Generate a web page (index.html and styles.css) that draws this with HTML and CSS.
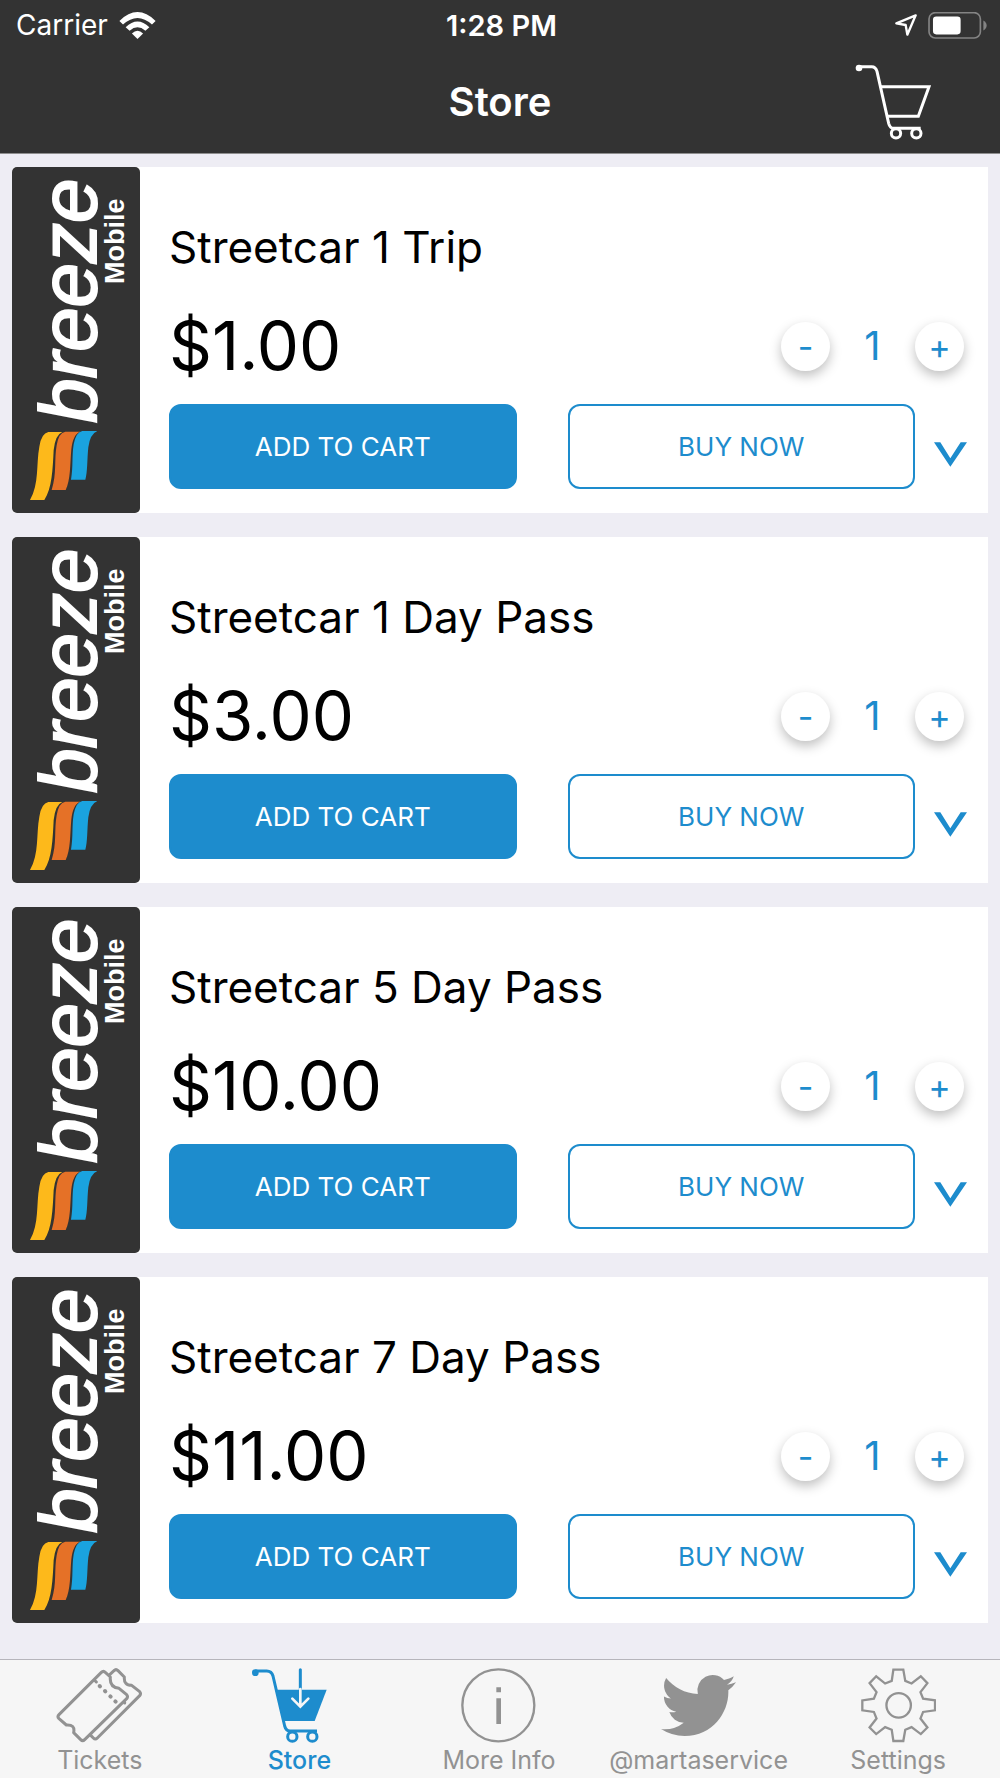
FILE: index.html
```html
<!DOCTYPE html>
<html lang="en">
<head>
<meta charset="utf-8">
<meta name="viewport" content="width=device-width, initial-scale=1">
<title>Store</title>
<link rel="stylesheet" href="styles.css">
</head>
<body>
<svg class="sprite" aria-hidden="true">
  <symbol id="cart" viewBox="0 0 231 228">
    <circle cx="12" cy="12" r="10" fill="currentColor"/>
    <g fill="none" stroke="currentColor" stroke-width="9">
      <path d="M10 8H50Q62 8 66 22L101 178Q105 193 116 193H197"/>
      <path d="M77 68H222L190 157H97"/>
      <circle cx="123" cy="208" r="14"/>
      <circle cx="184" cy="208" r="14"/>
    </g>
  </symbol>
  <symbol id="chevron" viewBox="0 0 99 74">
    <path d="M0 0H19L49 48L80 0H99L49 74Z" fill="currentColor"/>
  </symbol>
  <symbol id="breeze" viewBox="0 0 128 346">
    <g transform="rotate(-90)">
      <text class="brand-name" x="-256" y="84">breeze</text>
      <text class="brand-sub" x="-117" y="112">Mobile</text>
    </g>
    <g transform="translate(-12 -7) scale(.33333)">
      <path d="M145 816H187Q166 824 161 870C158 930 156 985 133 1020H90C118 970 108 915 118 860Q124 820 145 816Z" fill="#fdb91b"/>
      <path d="M196 815H241Q219 822 214 868C210 915 212 960 197 990H155C171 940 162 900 170 856Q176 818 196 815Z" fill="#e57127"/>
      <path d="M247 813H292Q270 822 265 862C261 900 263 935 256 959H213C220 920 215 890 221 853Q228 816 247 813Z" fill="#1aa3df"/>
    </g>
  </symbol>
</svg>

<header class="top">
  <div class="status">
    <div class="status-left">
      <span>Carrier</span>
      <svg class="wifi" viewBox="0 0 110 82" aria-hidden="true">
        <g fill="#fff">
          <path d="M0 27Q55-27 110 27L99 38Q55-2 11 38Z"/>
          <path d="M19 46Q55 12 91 46L79 57Q55 36 31 57Z"/>
          <path d="M38 65Q55 49 72 65L55 82Z"/>
        </g>
      </svg>
    </div>
    <div class="status-time">1:28 PM</div>
    <div class="status-right">
      <svg class="locate" viewBox="0 0 66 66" aria-hidden="true"><path d="M62 4L4 28L32 33L37 62Z" fill="none" stroke="#fff" stroke-width="7" stroke-linejoin="round"/></svg>
      <svg class="battery" viewBox="0 0 177 82" aria-hidden="true">
        <rect x="2" y="2" width="156" height="77" rx="19" fill="none" stroke="#848484" stroke-width="5"/>
        <rect x="14" y="14" width="84" height="54" rx="10" fill="#fff"/>
        <path d="M167 26Q177 32 177 41T167 56Z" fill="#848484"/>
      </svg>
    </div>
  </div>
  <div class="navbar">
    <h1>Store</h1>
    <button class="cart-button" aria-label="Cart"><svg><use href="#cart"/></svg></button>
  </div>
</header>

<main class="products">
  <article class="card">
    <svg class="brand" role="img" aria-label="breeze Mobile"><use href="#breeze"/></svg>
    <div class="info">
      <h2>Streetcar 1 Trip</h2>
      <div class="price-row">
        <span class="price">$1.00</span>
        <div class="stepper"><button aria-label="Decrease">-</button><output>1</output><button aria-label="Increase">+</button></div>
      </div>
      <div class="actions">
        <button class="action add">ADD TO CART</button>
        <button class="action buy">BUY NOW</button>
        <button class="expand" aria-label="Details"><svg><use href="#chevron"/></svg></button>
      </div>
    </div>
  </article>
  <article class="card">
    <svg class="brand" role="img" aria-label="breeze Mobile"><use href="#breeze"/></svg>
    <div class="info">
      <h2>Streetcar 1 Day Pass</h2>
      <div class="price-row">
        <span class="price">$3.00</span>
        <div class="stepper"><button aria-label="Decrease">-</button><output>1</output><button aria-label="Increase">+</button></div>
      </div>
      <div class="actions">
        <button class="action add">ADD TO CART</button>
        <button class="action buy">BUY NOW</button>
        <button class="expand" aria-label="Details"><svg><use href="#chevron"/></svg></button>
      </div>
    </div>
  </article>
  <article class="card">
    <svg class="brand" role="img" aria-label="breeze Mobile"><use href="#breeze"/></svg>
    <div class="info">
      <h2>Streetcar 5 Day Pass</h2>
      <div class="price-row">
        <span class="price">$10.00</span>
        <div class="stepper"><button aria-label="Decrease">-</button><output>1</output><button aria-label="Increase">+</button></div>
      </div>
      <div class="actions">
        <button class="action add">ADD TO CART</button>
        <button class="action buy">BUY NOW</button>
        <button class="expand" aria-label="Details"><svg><use href="#chevron"/></svg></button>
      </div>
    </div>
  </article>
  <article class="card">
    <svg class="brand" role="img" aria-label="breeze Mobile"><use href="#breeze"/></svg>
    <div class="info">
      <h2>Streetcar 7 Day Pass</h2>
      <div class="price-row">
        <span class="price">$11.00</span>
        <div class="stepper"><button aria-label="Decrease">-</button><output>1</output><button aria-label="Increase">+</button></div>
      </div>
      <div class="actions">
        <button class="action add">ADD TO CART</button>
        <button class="action buy">BUY NOW</button>
        <button class="expand" aria-label="Details"><svg><use href="#chevron"/></svg></button>
      </div>
    </div>
  </article>
</main>

<nav class="tabs">
  <a href="#tickets">
    <svg class="wide" viewBox="166 84 261 225" aria-hidden="true">
      <g fill="none" stroke="currentColor" stroke-width="9" stroke-linejoin="round" stroke-linecap="round">
        <path d="M302 97Q308 91 314 97L329 111Q326 142 355 145L378 164Q383 170 378 176L252 299Q246 305 240 299L219 278Q224 253 197 255L175 236Q169 230 175 224Z"/>
        <path d="M328 103L340 92Q346 86 352 92L371 111Q369 136 393 136L417 155Q422 161 417 167L290 294Q284 300 278 294L271 287M372 187V189M284 123L287 126"/>
        <path d="M297 138L298 139M313 153L314 154M329 169L330 170M344 184L345 185" stroke-width="12"/>
      </g>
    </svg>
    <span>Tickets</span>
  </a>
  <a href="#store" class="active" aria-current="page">
    <svg class="store" viewBox="0 0 282 225" aria-hidden="true">
      <circle cx="10" cy="14" r="10" fill="currentColor"/>
      <g fill="none" stroke="currentColor" stroke-width="9">
        <path d="M10 9H44Q59 9 63 24L98 174Q102 189 114 189H195"/>
        <circle cx="121" cy="206" r="14"/>
        <circle cx="181" cy="206" r="14"/>
        <path d="M145 5V66" stroke-linecap="round"/>
      </g>
      <path d="M72 65H224L188 159H96Z" fill="currentColor"/>
      <path d="M145 63V115M121 92L145 116L169 92" fill="none" stroke="#f6f6f6" stroke-width="8" stroke-linecap="round"/>
    </svg>
    <span>Store</span>
  </a>
  <a href="#info">
    <svg viewBox="0 0 225 225" aria-hidden="true">
      <circle cx="112" cy="112" r="108" fill="none" stroke="currentColor" stroke-width="7"/>
      <path d="M106 58H120V73H106ZM106 91H120V168H106Z" fill="currentColor"/>
    </svg>
    <span>More Info</span>
  </a>
  <a href="#twitter">
    <svg viewBox="0 0 24 24" aria-hidden="true"><path fill="currentColor" d="M23.953 4.57a10 10 0 01-2.825.775 4.958 4.958 0 002.163-2.723c-.951.555-2.005.959-3.127 1.184a4.92 4.92 0 00-8.384 4.482C7.69 8.095 4.067 6.13 1.64 3.162a4.822 4.822 0 00-.666 2.475c0 1.71.87 3.213 2.188 4.096a4.904 4.904 0 01-2.228-.616v.06a4.923 4.923 0 003.946 4.827 4.996 4.996 0 01-2.212.085 4.936 4.936 0 004.604 3.417 9.867 9.867 0 01-6.102 2.105c-.39 0-.779-.023-1.17-.067a13.995 13.995 0 007.557 2.209c9.053 0 13.998-7.496 13.998-13.985 0-.21 0-.42-.015-.63A9.935 9.935 0 0024 4.59z"/></svg>
    <span>@martaservice</span>
  </a>
  <a href="#settings">
    <svg viewBox="604 84 227 225" aria-hidden="true">
      <g fill="none" stroke="currentColor" stroke-width="7">
        <path d="M702 88H732L738 122L757 130L785 108L805 129L784 156L792 176L828 181V211L792 216L784 236L805 263L785 283L757 262L738 270L732 304H702L697 270L677 262L650 283L630 263L651 236L643 216L608 211V181L643 176L651 156L630 129L650 108L677 130L697 122Z"/>
        <circle cx="718" cy="196" r="37"/>
      </g>
    </svg>
    <span>Settings</span>
  </a>
</nav>
</body>
</html>
```
FILE: styles.css
```css
* { box-sizing: border-box; }

body {
  margin: 0;
  min-height: 100vh;
  display: flex;
  flex-direction: column;
  background: #eeedf4;
  color: #000;
  font-family: Inter, "Liberation Sans", sans-serif;
}

button {
  margin: 0;
  padding: 0;
  border: 0;
  background: none;
  font: inherit;
  color: inherit;
  cursor: pointer;
}

h1, h2 { margin: 0; }
svg { display: block; }
.sprite { display: none; }

.top {
  background: #333;
  color: #fff;
  border-bottom: 1px solid #8e8e8e;
}

.status {
  display: grid;
  grid-template-columns: 1fr auto 1fr;
  align-items: center;
  height: 50px;
  padding: 0 13px 0 16px;
  font-size: 28px;
}

.status-left, .status-right {
  display: flex;
  align-items: center;
  gap: 11px;
}

.status-right { justify-content: flex-end; }
.status-time { font-size: 29px; font-weight: 600; }
.wifi { width: 37px; height: 27px; }
.locate { width: 22px; height: 22px; }
.battery { width: 59px; height: 27px; }

.navbar {
  display: grid;
  grid-template-columns: 1fr auto 1fr;
  align-items: center;
  height: 103px;
  padding: 0 68px;
}

.navbar h1 {
  grid-column: 2;
  font-size: 40px;
  font-weight: 600;
}

.cart-button { justify-self: end; }
.cart-button svg { width: 77px; height: 76px; }

.products {
  flex: 1;
  display: flex;
  flex-direction: column;
  gap: 24px;
  padding: 13px 12px 35px;
}

.card {
  display: flex;
  background: #fff;
  border-radius: 4px 0 0 4px;
}

.brand {
  flex: none;
  width: 128px;
  height: 346px;
  background: #333;
  border-radius: 5px;
}

.brand-name {
  fill: #fff;
  stroke: #fff;
  stroke-width: 2px;
  font: italic 80px "Liberation Sans", sans-serif;
}

.brand-sub {
  fill: #fff;
  font: bold 27px "Liberation Sans", sans-serif;
}

.info {
  flex: 1;
  display: flex;
  flex-direction: column;
  padding: 52px 21px 24px 29px;
}

.info h2 {
  font-size: 44px;
  line-height: 56px;
  font-weight: 400;
}

.price-row {
  display: flex;
  align-items: center;
  justify-content: space-between;
  margin-top: 31px;
  padding-right: 3px;
}

.price {
  font-size: 67px;
  line-height: 80px;
}

.stepper {
  display: flex;
  align-items: center;
  color: #1d8ccd;
}

.stepper button {
  width: 49px;
  height: 49px;
  border-radius: 50%;
  background: #fff;
  box-shadow: 0 5px 12px rgba(0, 0, 0, .25);
  font-size: 34px;
  line-height: 49px;
}

.stepper output {
  width: 85px;
  font-size: 40px;
  line-height: 48px;
  text-align: center;
}

.actions {
  display: flex;
  align-items: center;
  margin-top: 18px;
}

.action {
  flex: 1;
  height: 85px;
  border: 2px solid #1d8ccd;
  border-radius: 12px;
  font-size: 26px;
}

.add {
  background: #1d8ccd;
  color: #fff;
}

.buy {
  margin-left: 51px;
  color: #1d8ccd;
}

.expand {
  margin-left: 19px;
  padding-top: 16px;
  color: #1d8ccd;
}

.expand svg { width: 33px; height: 25px; }

.tabs {
  position: sticky;
  bottom: 0;
  display: grid;
  grid-template-columns: repeat(5, 1fr);
  height: 119px;
  padding: 8px 2px 0 0;
  border-top: 1px solid #b6b5bb;
  background: #f6f6f6;
}

.tabs a {
  display: flex;
  flex-direction: column;
  align-items: center;
  gap: 2px;
  color: #929292;
  font-size: 25px;
  line-height: 30px;
  font-weight: 400;
  text-decoration: none;
}

.tabs svg { width: 75px; height: 75px; }
.tabs .wide { width: 87px; }
.tabs .store { width: 94px; }
.tabs .active { color: #1d8ccd; font-weight: 500; }
```
